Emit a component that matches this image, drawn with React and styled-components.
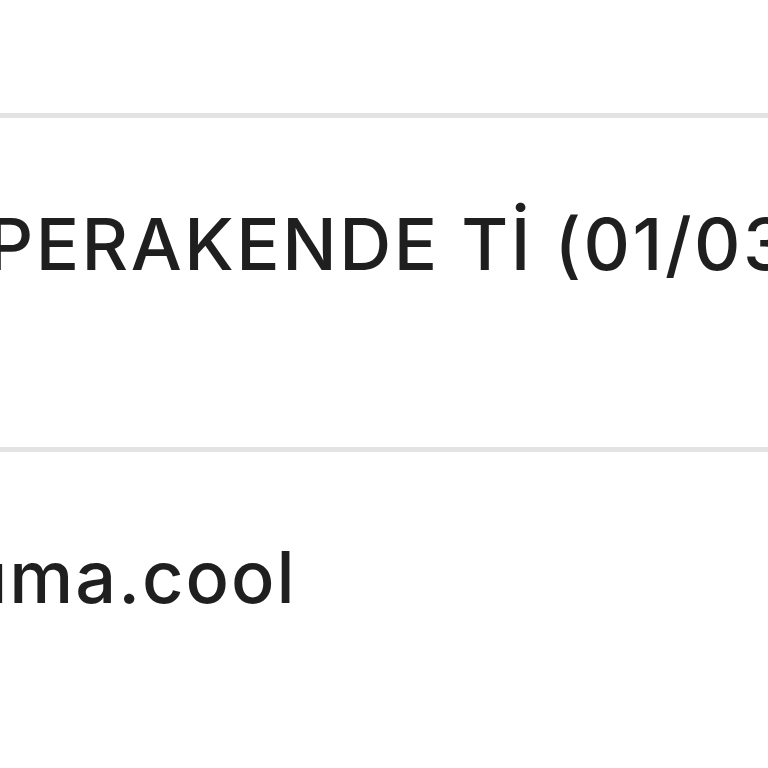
import React from 'react'
import styled, { createGlobalStyle } from 'styled-components'

const GlobalStyle = createGlobalStyle`
  html, body {
    margin: 0;
    padding: 0;
    background: #ffffff;
    overflow: hidden;
  }
`

const Page = styled.div`
  width: 768px;
  height: 768px;
  overflow: hidden;
  font-family: Inter, "Noto Sans", sans-serif;
  color: #1f1f1f;
`

const List = styled.div`
  display: flex;
  flex-direction: column;
  padding-top: 113px;
`

const Row = styled.div`
  border-top: 5px solid #e3e3e3;
  padding: ${(props) => props.pad || '90px 0 167px'};
  white-space: nowrap;
`

const Cell = styled.div`
  font-size: 72px;
  line-height: 1;
  font-weight: 500;
  margin-left: ${(props) => props.shift || '0px'};
  letter-spacing: ${(props) => props.spacing || '2.5px'};
`

export default function App() {
  return (
    <Page>
      <GlobalStyle />
      <List>
        <Row>
          <Cell shift="-13px">PERAKENDE Tİ (01/03/2024)</Cell>
        </Row>
        <Row pad="89px 0 200px">
          <Cell shift="-36px" spacing="2px">uma.cool</Cell>
        </Row>
      </List>
    </Page>
  )
}
